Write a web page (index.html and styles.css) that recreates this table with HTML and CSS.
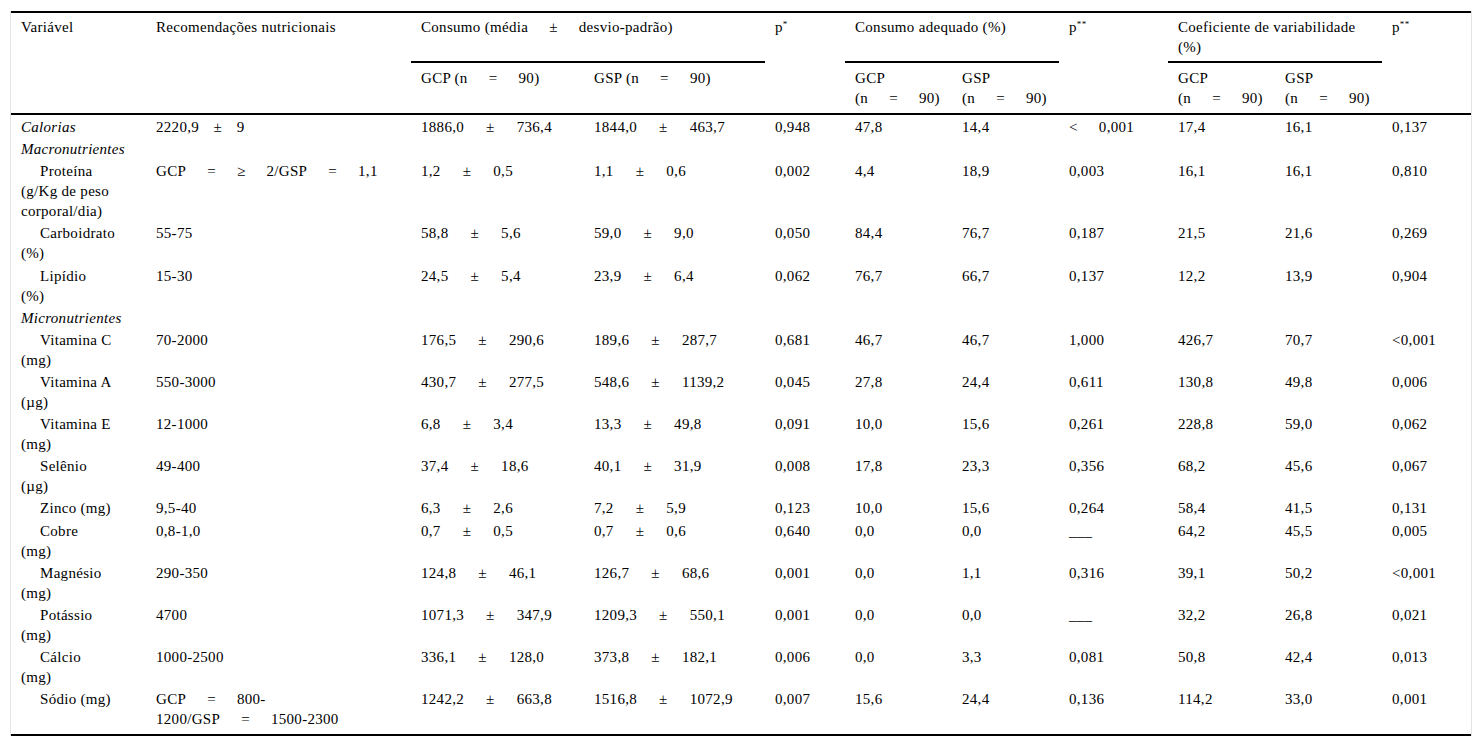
FILE: index.html
```html
<!DOCTYPE html>
<html lang="pt">
<head>
<meta charset="utf-8">
<title>Tabela</title>
<link rel="stylesheet" href="styles.css">
</head>
<body>
<div class="wrap">
<table class="tbl">
<colgroup>
<col class="c1"><col class="c2"><col class="c3"><col class="c4"><col class="c5"><col class="c6"><col class="c7"><col class="c8"><col class="c9"><col class="c10"><col class="c11">
</colgroup>
<thead>
<tr class="r1">
<th rowspan="2">Variável</th>
<th rowspan="2">Recomendações nutricionais</th>
<th colspan="2" class="grp">Consumo <span class="w">(média&nbsp;±&nbsp;desvio-padrão)</span></th>
<th rowspan="2">p<sup>*</sup></th>
<th colspan="2" class="grp">Consumo adequado (%)</th>
<th rowspan="2">p<sup>**</sup></th>
<th colspan="2" class="grp">Coeficiente de variabilidade (%)</th>
<th rowspan="2">p<sup>**</sup></th>
</tr>
<tr class="r2">
<th>GCP <span class="w">(n&nbsp;=&nbsp;90)</span></th>
<th>GSP <span class="w">(n&nbsp;=&nbsp;90)</span></th>
<th>GCP <span class="w">(n&nbsp;=&nbsp;90)</span></th>
<th>GSP <span class="w">(n&nbsp;=&nbsp;90)</span></th>
<th>GCP <span class="w">(n&nbsp;=&nbsp;90)</span></th>
<th>GSP <span class="w">(n&nbsp;=&nbsp;90)</span></th>
</tr>
</thead>
<tbody>
<tr><td class="it">Calorias</td><td class="pm">2220,9&nbsp;±&nbsp;9</td><td class="pc">1886,0&nbsp;±&nbsp;736,4</td><td class="pc">1844,0&nbsp;±&nbsp;463,7</td><td>0,948</td><td>47,8</td><td>14,4</td><td class="w">&lt;&nbsp;0,001</td><td>17,4</td><td>16,1</td><td>0,137</td></tr>
<tr><td class="it">Macronutrientes</td><td></td><td></td><td></td><td></td><td></td><td></td><td></td><td></td><td></td><td></td></tr>
<tr><td class="ind">Proteína<br>(g/Kg de peso corporal/dia)</td><td class="w">GCP&nbsp;=&nbsp;≥&nbsp;2/GSP&nbsp;=&nbsp;1,1</td><td class="pc">1,2&nbsp;±&nbsp;0,5</td><td class="pc">1,1&nbsp;±&nbsp;0,6</td><td>0,002</td><td>4,4</td><td>18,9</td><td>0,003</td><td>16,1</td><td>16,1</td><td>0,810</td></tr>
<tr><td class="ind">Carboidrato<br>(%)</td><td>55-75</td><td class="pc">58,8&nbsp;±&nbsp;5,6</td><td class="pc">59,0&nbsp;±&nbsp;9,0</td><td>0,050</td><td>84,4</td><td>76,7</td><td>0,187</td><td>21,5</td><td>21,6</td><td>0,269</td></tr>
<tr><td class="ind">Lipídio<br>(%)</td><td>15-30</td><td class="pc">24,5&nbsp;±&nbsp;5,4</td><td class="pc">23,9&nbsp;±&nbsp;6,4</td><td>0,062</td><td>76,7</td><td>66,7</td><td>0,137</td><td>12,2</td><td>13,9</td><td>0,904</td></tr>
<tr><td class="it">Micronutrientes</td><td></td><td></td><td></td><td></td><td></td><td></td><td></td><td></td><td></td><td></td></tr>
<tr><td class="ind">Vitamina C<br>(mg)</td><td>70-2000</td><td class="pc">176,5&nbsp;±&nbsp;290,6</td><td class="pc">189,6&nbsp;±&nbsp;287,7</td><td>0,681</td><td>46,7</td><td>46,7</td><td>1,000</td><td>426,7</td><td>70,7</td><td>&lt;0,001</td></tr>
<tr><td class="ind">Vitamina A<br>(µg)</td><td>550-3000</td><td class="pc">430,7&nbsp;±&nbsp;277,5</td><td class="pc">548,6&nbsp;±&nbsp;1139,2</td><td>0,045</td><td>27,8</td><td>24,4</td><td>0,611</td><td>130,8</td><td>49,8</td><td>0,006</td></tr>
<tr><td class="ind">Vitamina E<br>(mg)</td><td>12-1000</td><td class="pc">6,8&nbsp;±&nbsp;3,4</td><td class="pc">13,3&nbsp;±&nbsp;49,8</td><td>0,091</td><td>10,0</td><td>15,6</td><td>0,261</td><td>228,8</td><td>59,0</td><td>0,062</td></tr>
<tr><td class="ind">Selênio<br>(µg)</td><td>49-400</td><td class="pc">37,4&nbsp;±&nbsp;18,6</td><td class="pc">40,1&nbsp;±&nbsp;31,9</td><td>0,008</td><td>17,8</td><td>23,3</td><td>0,356</td><td>68,2</td><td>45,6</td><td>0,067</td></tr>
<tr><td class="ind">Zinco (mg)</td><td>9,5-40</td><td class="pc">6,3&nbsp;±&nbsp;2,6</td><td class="pc">7,2&nbsp;±&nbsp;5,9</td><td>0,123</td><td>10,0</td><td>15,6</td><td>0,264</td><td>58,4</td><td>41,5</td><td>0,131</td></tr>
<tr><td class="ind">Cobre<br>(mg)</td><td>0,8-1,0</td><td class="pc">0,7&nbsp;±&nbsp;0,5</td><td class="pc">0,7&nbsp;±&nbsp;0,6</td><td>0,640</td><td>0,0</td><td>0,0</td><td>___</td><td>64,2</td><td>45,5</td><td>0,005</td></tr>
<tr><td class="ind">Magnésio<br>(mg)</td><td>290-350</td><td class="pc">124,8&nbsp;±&nbsp;46,1</td><td class="pc">126,7&nbsp;±&nbsp;68,6</td><td>0,001</td><td>0,0</td><td>1,1</td><td>0,316</td><td>39,1</td><td>50,2</td><td>&lt;0,001</td></tr>
<tr><td class="ind">Potássio<br>(mg)</td><td>4700</td><td class="pc">1071,3&nbsp;±&nbsp;347,9</td><td class="pc">1209,3&nbsp;±&nbsp;550,1</td><td>0,001</td><td>0,0</td><td>0,0</td><td>___</td><td>32,2</td><td>26,8</td><td>0,021</td></tr>
<tr><td class="ind">Cálcio<br>(mg)</td><td>1000-2500</td><td class="pc">336,1&nbsp;±&nbsp;128,0</td><td class="pc">373,8&nbsp;±&nbsp;182,1</td><td>0,006</td><td>0,0</td><td>3,3</td><td>0,081</td><td>50,8</td><td>42,4</td><td>0,013</td></tr>
<tr><td class="ind">Sódio (mg)</td><td class="w">GCP&nbsp;=&nbsp;800-1200/GSP&nbsp;=&nbsp;1500-2300</td><td class="pc">1242,2&nbsp;±&nbsp;663,8</td><td class="pc">1516,8&nbsp;±&nbsp;1072,9</td><td>0,007</td><td>15,6</td><td>24,4</td><td>0,136</td><td>114,2</td><td>33,0</td><td>0,001</td></tr>
</tbody>
</table>
</div>
</body>
</html>
```

FILE: styles.css
```css
html, body {
  margin: 0;
  padding: 0;
  background: #ffffff;
}

body {
  font-family: "Times New Roman", "Liberation Serif", Tinos, "DejaVu Serif", serif;
  font-size: 15px;
  color: #000000;
}

.wrap {
  margin: 11px 10px 0 10px;
  width: 1460px;
  border-left: 1px solid #e4e4e4;
  border-right: 1px solid #e4e4e4;
}

.tbl {
  width: 1460px;
  table-layout: fixed;
  border-collapse: collapse;
  border-top: 2px solid #000;
  border-bottom: 2px solid #000;
}

.c1 { width: 135px; }
.c2 { width: 265px; }
.c3 { width: 173px; }
.c4 { width: 181px; }
.c5 { width: 80px; }
.c6 { width: 107px; }
.c7 { width: 107px; }
.c8 { width: 109px; }
.c9 { width: 107px; }
.c10 { width: 107px; }
.c11 { width: 89px; }

.tbl th,
.tbl td {
  font-family: "Times New Roman", "Liberation Serif", Tinos, "DejaVu Serif", serif;
  text-align: left;
  vertical-align: top;
  font-weight: normal;
  line-height: 20px;
  letter-spacing: 0.3px;
  padding: 1px 10px 1.15px;
}

.tbl thead {
  border-bottom: 2px solid #000;
}

.r1 th {
  padding-top: 4px;
  padding-bottom: 4px;
}

.r2 th {
  padding-top: 5px;
  padding-bottom: 5px;
}

.grp {
  border-bottom: 2px solid #000;
}

.tbl tbody tr:first-child td {
  padding-top: 2px;
}

.tbl tbody tr:last-child td {
  padding-bottom: 5px;
}

sup {
  font-size: 9px;
  line-height: 0;
  vertical-align: 5px;
}

.it { font-style: italic; }
.ind { text-indent: 19px; }
.w { word-spacing: 17px; }
.pm { word-spacing: 10.5px; }
.pc { word-spacing: 18px; }
```
